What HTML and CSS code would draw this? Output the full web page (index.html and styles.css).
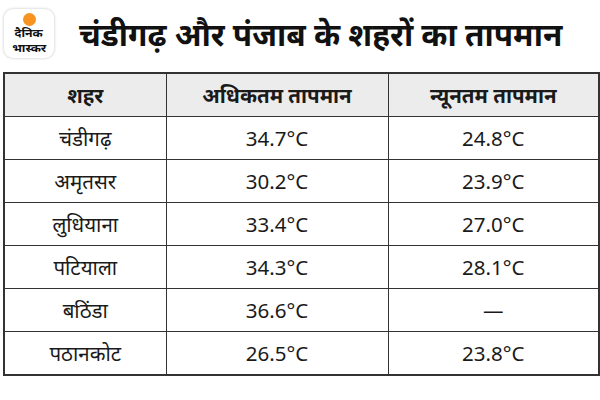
FILE: index.html
```html
<!DOCTYPE html>
<html lang="hi">
<head>
<meta charset="utf-8">
<link rel="stylesheet" href="styles.css">
</head>
<body>
<div class="page">
  <header class="head">
    <div class="logo">
      <span class="dot"></span>
      <span class="brand">दैनिक</span>
      <span class="brand">भास्कर</span>
    </div>
    <h1 class="title">चंडीगढ़ और पंजाब के शहरों का तापमान</h1>
  </header>
  <table class="temps">
    <colgroup><col class="c1"><col class="c2"><col class="c3"></colgroup>
    <thead>
      <tr><th>शहर</th><th>अधिकतम तापमान</th><th>न्यूनतम तापमान</th></tr>
    </thead>
    <tbody>
      <tr><td>चंडीगढ़</td><td>34.7°C</td><td>24.8°C</td></tr>
      <tr><td>अमृतसर</td><td>30.2°C</td><td>23.9°C</td></tr>
      <tr><td>लुधियाना</td><td>33.4°C</td><td>27.0°C</td></tr>
      <tr><td>पटियाला</td><td>34.3°C</td><td>28.1°C</td></tr>
      <tr><td>बठिंडा</td><td>36.6°C</td><td>—</td></tr>
      <tr><td>पठानकोट</td><td>26.5°C</td><td>23.8°C</td></tr>
    </tbody>
  </table>
</div>
</body>
</html>
```
FILE: styles.css
```css
html, body {
  margin: 0;
  padding: 0;
  background: #ffffff;
}
body {
  font-family: "Noto Sans", "Open Sans", sans-serif;
  color: #1a1a1a;
}
.page {
  width: 600px;
  height: 400px;
  padding: 8px 2px 0 3px;
  box-sizing: border-box;
}
.head {
  display: flex;
  align-items: center;
  gap: 25px;
  height: 50px;
  margin-bottom: 14px;
}
.logo {
  width: 50px;
  height: 49px;
  margin-left: 1px;
  border-radius: 9px;
  background: #fff;
  box-shadow: 0 0 3px rgba(0,0,0,0.25);
  display: flex;
  flex-direction: column;
  align-items: center;
  padding-top: 4px;
  box-sizing: border-box;
  flex: none;
}
.dot {
  width: 13px;
  height: 13px;
  border-radius: 50%;
  background: #f7931e;
  flex: none;
  margin-bottom: -1px;
}
.brand {
  font-size: 11px;
  font-weight: 700;
  line-height: 15px;
  height: 15px;
  text-align: center;
  color: #111;
  transform: scaleX(1.12);
}
.title {
  margin: 0;
  font-size: 31.5px;
  font-weight: 700;
  color: #111;
  white-space: nowrap;
}
.temps {
  width: 595px;
  border-collapse: collapse;
  table-layout: fixed;
  border: 2px solid #333;
}
.c1 { width: 162px; }
.c2 { width: 222px; }
.c3 { width: 211px; }
.temps th, .temps td {
  border: 1.5px solid #333;
  height: 42px;
  padding: 0;
  text-align: center;
  font-size: 20.5px;
  color: #1a1a1a;
}
.temps th {
  background: #ececec;
  font-weight: 700;
}
.temps td {
  font-weight: 400;
}
```
